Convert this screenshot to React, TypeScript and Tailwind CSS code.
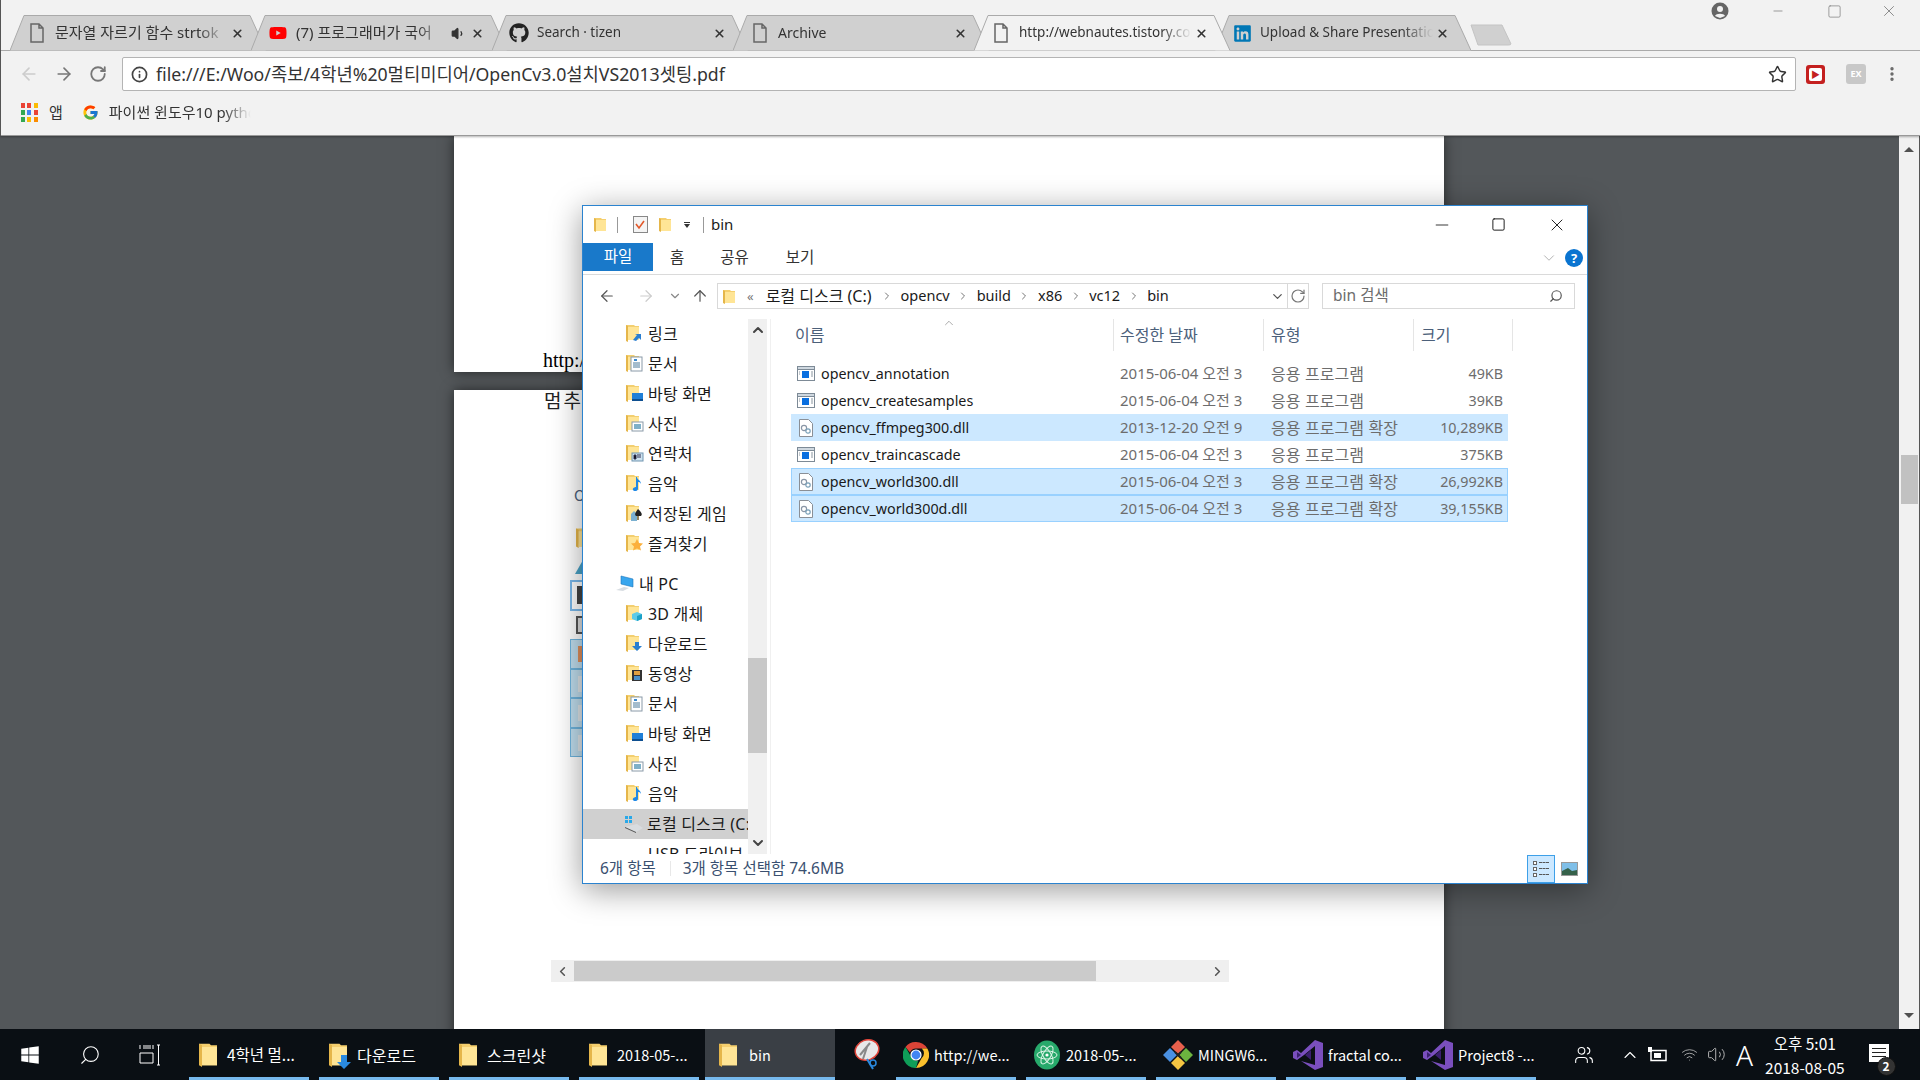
import React from "react";
import { FaGithub, FaYoutube, FaLinkedin, FaWindows } from "react-icons/fa";
import { FcGoogle } from "react-icons/fc";
import { X, Star, RotateCw, ArrowLeft, ArrowRight, Info, ChevronDown, ChevronUp, ChevronLeft, ChevronRight, Search, ArrowUp, Minus, Square, Volume1, Volume2, Users, Wifi, MoreVertical } from "lucide-react";

const FONT = "font-['Noto_Sans','Noto_Sans_CJK_KR',sans-serif]";
const CJK = "font-['Noto_Sans_CJK_KR','Noto_Sans',sans-serif]";

function PageIcon({ className = "" }: { className?: string }) {
  return (
    <svg width="14" height="20" viewBox="0 0 14 20" className={className}>
      <path d="M1 1h8l4 4v14H1z M9 1v4h4" fill="none" stroke="#666" strokeWidth="1.5" />
    </svg>
  );
}

function Folder({ w = 12, h = 15, className = "" }: { w?: number; h?: number; className?: string }) {
  return (
    <svg width={w} height={h} viewBox="0 0 12 15" preserveAspectRatio="none" className={className}>
      <path d="M0 1h7l1 1h4v12H2z" fill="#f5cf6e" />
      <path d="M0 1l2 1v13l-2-1z" fill="#e5b64a" />
      <path d="M2 3h10v11H2z" fill="#ffe596" />
    </svg>
  );
}

type TabT = { icon: React.ReactNode; title: string; active?: boolean; sound?: boolean; size: string };
const tabs: TabT[] = [
  { icon: <PageIcon />, title: "문자열 자르기 함수 strtok", size: "text-[15px]" },
  { icon: <FaYoutube size={18} color="#f00" />, title: "(7) 프로그래머가 국어", sound: true, size: "text-[15px]" },
  { icon: <FaGithub size={20} color="#222" />, title: "Search · tizen", size: "text-[13.5px]" },
  { icon: <PageIcon />, title: "Archive", size: "text-[14px]" },
  { icon: <PageIcon />, title: "http://webnautes.tistory.com", active: true, size: "text-[13.5px]" },
  { icon: <FaLinkedin size={19} color="#0077b5" />, title: "Upload & Share Presentations", size: "text-[13.5px]" },
];

function Tab({ t }: { t: TabT }) {
  return (
    <div className={`relative w-[256px] h-[36px] -ml-[15px] first:ml-0 shrink-0 flex items-center ${t.active ? "z-10" : ""}`}>
      <svg width="256" height="36" viewBox="0 0 256 36" className="absolute inset-0">
        <path d="M0 35.5L14 .5H240L256 35.5" fill={t.active ? "#f2f2f2" : "#d0d0d0"} stroke="#aaa" />
      </svg>
      <div className="relative w-[20px] ml-[17px] flex justify-center">{t.icon}</div>
      <div className={`relative ml-[8px] mb-[1px] ${t.sound ? "w-[149px]" : "w-[173px]"} overflow-hidden whitespace-nowrap ${t.size} text-[#333] [mask-image:linear-gradient(to_right,black_82%,transparent)]`}>
        {t.title}
      </div>
      {t.sound && <Volume1 size={15} className="relative ml-[6px]" fill="#333" color="#333" />}
      <X size={13} strokeWidth={3} color="#333" className={`relative ${t.sound ? "ml-[5px]" : "ml-[3px]"}`} />
    </div>
  );
}

function TabStrip() {
  return (
    <div className="h-[51px] flex items-start border-b border-[#aaa] pl-[9px]">
      <div className="flex pt-[15px]">
        {tabs.map((t) => (
          <Tab key={t.title} t={t} />
        ))}
        <svg width="42" height="22" viewBox="0 0 42 22" className="-ml-[1px] mt-[9px]">
          <path d="M1 1H32L41 20Q41 21 38 21H8Z" fill="#d0d0d0" stroke="#c4c4c4" />
        </svg>
      </div>
      <div className="flex-1" />
      <div className="flex items-center h-[22px] pr-[22px]">
        <svg width="18" height="18" viewBox="0 0 18 18">
          <circle cx="9" cy="9" r="8.5" fill="#666" />
          <circle cx="9" cy="7" r="3" fill="#f2f2f2" />
          <path d="M4 14c1-3 9-3 10 0l-5 2z" fill="#f2f2f2" />
        </svg>
        <Minus size={14} color="#777" strokeWidth={1.2} className="ml-[42px]" />
        <Square size={15} color="#777" strokeWidth={1.1} className="ml-[42px]" />
        <X size={18} color="#777" strokeWidth={1.1} className="ml-[38px]" />
      </div>
    </div>
  );
}

function Toolbar() {
  return (
    <div className="h-[46px] flex items-start pt-[6px]">
      <div className="w-[121px] h-[34px] flex items-center pl-[18px] gap-[15px]">
        <ArrowLeft size={20} color="#ccc" />
        <ArrowRight size={20} color="#777" />
        <RotateCw size={18} color="#777" strokeWidth={2.4} />
      </div>
      <div className="w-[1674px] h-[34px] bg-white border border-[#b4b4b4] rounded-[2px] flex items-center pl-[8px] pr-[8px]">
        <Info size={17} color="#444" strokeWidth={2.4} />
        <span className="ml-[8px] text-[17.7px] text-[#333] whitespace-nowrap">file:///E:/Woo/족보/4학년%20멀티미디어/OpenCv3.0설치VS2013셋팅.pdf</span>
        <div className="flex-1" />
        <Star size={19} color="#333" strokeWidth={1.8} />
      </div>
      <div className="flex-1 h-[34px] flex items-center pl-[10px]">
        <div className="w-[19px] h-[19px] rounded-[3px] bg-[#c4201f] flex items-center justify-center">
          <div className="w-[13px] h-[13px] bg-white rounded-[2px] flex items-center justify-center text-[9px] text-[#c4201f] font-bold leading-none">▶</div>
        </div>
        <div className="ml-[21px] w-[20px] h-[20px] rounded-[3px] bg-[#c8c8c8] flex items-center justify-center text-[9px] text-white font-bold">EX</div>
        <MoreVertical size={18} color="#666" strokeWidth={2.5} className="ml-[17px]" />
      </div>
    </div>
  );
}

function AppsGrid() {
  const c = ["#ea4335", "#ea4335", "#fbbc05", "#34a853", "#4285f4", "#ea4335", "#34a853", "#fbbc05", "#fb8c00"];
  return (
    <div className="grid grid-cols-3 gap-[2px] w-[17px]">
      {c.map((x, i) => (
        <div key={i} className="h-[5px] w-[4px]" style={{ background: x }} />
      ))}
    </div>
  );
}

function Bookmarks() {
  return (
    <div className="h-[39px] flex items-center border-b border-[#999] pl-[20px] pb-[7px] text-[15px] text-[#333]">
      <AppsGrid />
      <span className="ml-[11px]">앱</span>
      <FcGoogle size={17} className="ml-[19px]" />
      <span className="ml-[10px] w-[142px] overflow-hidden whitespace-nowrap [mask-image:linear-gradient(to_right,black_80%,transparent)]">파이썬 윈도우10 python</span>
    </div>
  );
}

function BehindBits() {
  return (
    <div className={`ml-[116px] w-[60px] ${CJK}`}>
      <div className="mt-[77px] ml-[4px] h-[16px] text-[15px] leading-[16px] text-[#4c607a]">O</div>
      <div className="mt-[24px] ml-[6px]"><Folder w={16} h={21} /></div>
      <div className="mt-[12px] ml-[5px] w-0 h-0 border-x-[8px] border-x-transparent border-b-[14px] border-b-[#4aa3c7]" />
      <div className="mt-[6px] h-[31px] border-2 border-[#7ab8ea] pl-[5px] pt-[4px]"><div className="w-[10px] h-[18px] bg-[#444]" /></div>
      <div className="mt-[5px] ml-[6px] w-[10px] h-[18px] border-2 border-[#555] bg-[#ddd]" />
      <div className="mt-[5px]">
        {["bg-[#e0905c]", "bg-[#dfe6ea]", "bg-[#dfe6ea]", "bg-[#dfe6ea]"].map((c, i) => (
          <div key={i} className="h-[29.5px] border border-[#6eb4dd] bg-[#c0deee] pl-[7px] pt-[6px]">
            <div className={`w-[8px] h-[16px] ${c}`} />
          </div>
        ))}
      </div>
    </div>
  );
}

function PdfArea() {
  return (
    <div className="flex-1 flex min-h-0">
      <div className="flex-1 bg-[#53575a] overflow-hidden">
        <div className="ml-[454px] w-[990px] h-[236px] bg-white shadow-[0_0_12px_rgba(0,0,0,0.55)] flex flex-col justify-end pl-[89px] font-['Liberation_Serif',serif] text-[20px] leading-[23px] text-black">
          http://
        </div>
        <div className="ml-[454px] mt-[18px] w-[990px] h-[700px] bg-white shadow-[0_0_12px_rgba(0,0,0,0.55)]">
          <div className={`pl-[90px] text-[19px] tracking-[2px] leading-[20px] text-[#222] ${CJK}`}>멈추</div>
          <BehindBits />
          <div className="ml-[97px] mt-[203px] w-[678px] h-[22px] bg-[#efefef] flex items-center relative">
            <ChevronLeft size={15} color="#555" strokeWidth={2.5} className="ml-[4px]" />
            <div className="absolute left-[23px] top-[1px] bottom-[1px] w-[522px] bg-[#cbcbcb]" />
            <div className="flex-1" />
            <ChevronRight size={15} color="#555" strokeWidth={2.5} className="mr-[4px]" />
          </div>
        </div>
      </div>
      <div className="w-[21px] bg-[#f1f1f1] border-r border-[#555] flex flex-col items-center relative">
        <div className="mt-[11px] w-0 h-0 border-x-[5px] border-x-transparent border-b-[5px] border-b-[#505050]" />
        <div className="mt-[303px] w-[17px] h-[49px] bg-[#c1c1c1]" />
        <div className="flex-1" />
        <div className="mb-[11px] w-0 h-0 border-x-[5px] border-x-transparent border-t-[5px] border-t-[#505050]" />
      </div>
    </div>
  );
}

/* ---------- explorer ---------- */
function Overlay({ kind }: { kind: string }) {
  switch (kind) {
    case "link":
      return <path d="M7 16l4-5-2-1h6v6l-2-2-3 3z" fill="#2a7fd0" />;
    case "doc":
      return <g><rect x="5" y="3" width="11" height="14" fill="#fff" stroke="#8a9aa8" /><path d="M7 9h7M7 11h7M7 13h7" stroke="#4a7a9a" /><path d="M8 5h3v2H8z" fill="#3a8ad0" /></g>;
    case "desktop":
      return <g><rect x="6" y="9" width="11" height="7" fill="#1f7fd8" /><rect x="6" y="15" width="11" height="2" fill="#0e4f90" /></g>;
    case "pic":
      return <g><rect x="6" y="8" width="11" height="9" fill="#fff" stroke="#8a9aa8" /><rect x="8" y="10" width="7" height="5" fill="#7fb0c8" /></g>;
    case "contact":
      return <g><rect x="6" y="9" width="11" height="8" fill="#cfe3f0" stroke="#6f94b0" /><path d="M8 11h2v4H8zM11 11h4M11 13h4" stroke="#335" /></g>;
    case "music":
      return <path d="M10 3l1 0c0 3 4 3 4 7-1-2-2-2-3-2v7c0 2-4 3-5 1s2-3 3-3z" fill="#1e88e5" />;
    case "game":
      return <g><path d="M5 10l3-3 3 3v7H5z" fill="#7ab0d0" /><path d="M12 5c3 3 5 5 3 7h-5c-2-2 0-4 2-7z" fill="#222" /><path d="M12 10v6" stroke="#222" /></g>;
    case "star":
      return <path d="M11 5l2 4 4 .5-3 3 1 4-4-2-4 2 1-4-3-3 4-.5z" fill="#fbb03b" />;
    case "cube":
      return <g><path d="M11 8l5 2v5l-5 2-5-2v-5z" fill="#5ccbe8" /><path d="M11 12l5-2v5l-5 2z" fill="#1ba0c8" /></g>;
    case "down":
      return <path d="M9 8h4v4h3l-5 5-5-5h3z" fill="#2a7fd0" />;
    case "video":
      return <g><rect x="6" y="6" width="10" height="11" fill="#333" /><rect x="8" y="7" width="6" height="4" fill="#e0a040" /><rect x="8" y="12" width="6" height="4" fill="#4a90c8" /></g>;
    default:
      return null;
  }
}

function TreeIcon({ kind }: { kind: string }) {
  return (
    <svg width="20" height="20" viewBox="0 0 20 20" className="shrink-0">
      <path d="M0 1h8l1 1h4v13H2z" fill="#f3cf70" />
      <path d="M0 1l2 1v16l-2-1z" fill="#e5b64a" />
      <path d="M2 3h11v13H2z" fill="#ffe596" />
      <Overlay kind={kind} />
    </svg>
  );
}

const quick = [
  ["링크", "link"],
  ["문서", "doc"],
  ["바탕 화면", "desktop"],
  ["사진", "pic"],
  ["연락처", "contact"],
  ["음악", "music"],
  ["저장된 게임", "game"],
  ["즐겨찾기", "star"],
];
const pc = [
  ["3D 개체", "cube"],
  ["다운로드", "down"],
  ["동영상", "video"],
  ["문서", "doc"],
  ["바탕 화면", "desktop"],
  ["사진", "pic"],
  ["음악", "music"],
];

function TreeRow({ label, kind }: { label: string; kind: string }) {
  return (
    <div className="h-[30px] flex items-center pl-[43px] gap-[2px] whitespace-nowrap">
      <TreeIcon kind={kind} />
      <span>{label}</span>
    </div>
  );
}

function NavTree() {
  return (
    <div className="flex h-full">
      <div className="w-[165px] h-full overflow-hidden text-[16px] tracking-[0.2px] text-[#1a1a1a]">
        {quick.map(([l, k]) => (
          <TreeRow key={l} label={l} kind={k} />
        ))}
        <div className="h-[10px]" />
        <div className="h-[30px] flex items-center pl-[32px] gap-[4px]">
          <svg width="20" height="18" viewBox="0 0 20 18" className="shrink-0">
            <path d="M6 1l12 3v8L6 9z" fill="#38a6ee" stroke="#1b75bc" strokeWidth=".6" />
            <path d="M1 15l8-3 5 1-6 3z" fill="#d8dde2" />
          </svg>
          <span>내 PC</span>
        </div>
        {pc.map(([l, k]) => (
          <TreeRow key={l} label={l} kind={k} />
        ))}
        <div className="h-[30px] bg-[#d0d0d0] flex items-center pl-[41px] gap-[3px] whitespace-nowrap">
          <svg width="20" height="18" viewBox="0 0 20 18" className="shrink-0">
            <path d="M1 1h3v3H1zM5 1h3v3H5zM1 5h3v3H1zM5 5h3v3H5z" fill="#29a8e8" />
            <path d="M1 12l12-3 6 4-7 4z" fill="#d9dcdf" />
            <path d="M1 12l11 5v1L1 13z" fill="#555" />
          </svg>
          <span>로컬 디스크 (C:)</span>
        </div>
        <div className="h-[30px] pl-[65px] flex items-center whitespace-nowrap">USB 드라이브 (D:)</div>
      </div>
      <div className="w-[19px] bg-[#f0f0f0] flex flex-col items-center">
        <ChevronUp size={16} strokeWidth={3} color="#444" className="mt-[3px]" />
        <div className="mt-[320px] w-full h-[95px] bg-[#c8c8c8]" />
        <div className="flex-1" />
        <ChevronDown size={16} strokeWidth={3} color="#444" className="mb-[3px]" />
      </div>
      <div className="w-[4px] border-r border-[#f0f0f0]" />
    </div>
  );
}

function ExeIcon() {
  return (
    <svg width="18" height="15" viewBox="0 0 18 15" className="shrink-0">
      <rect x=".5" y=".5" width="17" height="14" fill="#fff" stroke="#7d8a96" />
      <rect x=".5" y=".5" width="17" height="3" fill="#cfd8e0" stroke="#7d8a96" />
      <rect x="5" y="5" width="7" height="7" fill="#0a6fe0" />
      <path d="M14 6h2M14 8h2M14 10h2M2 6h1M2 8h1" stroke="#8a96a0" />
    </svg>
  );
}
function DllIcon() {
  return (
    <svg width="14" height="18" viewBox="0 0 14 18" className="shrink-0 ml-[2px] mr-[2px]">
      <path d="M.5.5h9l4 4v13H.5z" fill="#fff" stroke="#8a8f96" />
      <circle cx="5" cy="9" r="2.6" fill="none" stroke="#8a96a6" strokeWidth="1.2" />
      <circle cx="9" cy="12" r="2.2" fill="none" stroke="#7aa0b8" strokeWidth="1.2" />
    </svg>
  );
}

const files = [
  { n: "opencv_annotation", d: "2015-06-04 오전 3", t: "응용 프로그램", s: "49KB", dll: false, sel: 0 },
  { n: "opencv_createsamples", d: "2015-06-04 오전 3", t: "응용 프로그램", s: "39KB", dll: false, sel: 0 },
  { n: "opencv_ffmpeg300.dll", d: "2013-12-20 오전 9", t: "응용 프로그램 확장", s: "10,289KB", dll: true, sel: 1 },
  { n: "opencv_traincascade", d: "2015-06-04 오전 3", t: "응용 프로그램", s: "375KB", dll: false, sel: 0 },
  { n: "opencv_world300.dll", d: "2015-06-04 오전 3", t: "응용 프로그램 확장", s: "26,992KB", dll: true, sel: 2 },
  { n: "opencv_world300d.dll", d: "2015-06-04 오전 3", t: "응용 프로그램 확장", s: "39,155KB", dll: true, sel: 2 },
];

function FilePane() {
  return (
    <div className="flex-1 pl-[20px] min-w-0">
      <div className="relative grid grid-cols-[322px_150px_150px_100px] h-[32px] text-[16px] text-[#4c607a]">
        <div className="pl-[4px] flex items-center">이름</div>
        <div className="pl-[6px] flex items-center border-l border-[#e5e5e5]">수정한 날짜</div>
        <div className="pl-[7px] flex items-center border-l border-[#e5e5e5]">유형</div>
        <div className="pl-[7px] flex items-center border-l border-r border-[#e5e5e5]">크기</div>
        <ChevronUp size={14} color="#888" strokeWidth={1.2} className="absolute left-[151px] -top-[3px]" />
      </div>
      <div className="mt-[9px] w-[717px] text-[14.3px]">
        {files.map((f) => (
          <div
            key={f.n}
            className={`grid grid-cols-[322px_150px_150px_95px] h-[27px] items-center border ${f.sel ? "bg-[#cce8ff]" : ""} ${f.sel === 2 ? "border-[#99d1ff]" : "border-transparent"}`}
          >
            <div className="pl-[5px] flex items-center gap-[6px] text-[#1a1a1a] whitespace-nowrap">
              {f.dll ? <DllIcon /> : <ExeIcon />}
              <span>{f.n}</span>
            </div>
            <div className="pl-[6px] text-[15px] text-[#6d6d6d] whitespace-nowrap">{f.d}</div>
            <div className="pl-[7px] text-[16px] tracking-[0.1px] text-[#6d6d6d] whitespace-nowrap">{f.t}</div>
            <div className="pr-[6px] text-right text-[#6d6d6d]">{f.s}</div>
          </div>
        ))}
      </div>
    </div>
  );
}

function Crumb() {
  return <ChevronRight size={12} color="#777" strokeWidth={2} className="shrink-0" />;
}

function Explorer() {
  return (
    <div className={`absolute left-[582px] top-[205px] w-[1006px] h-[679px] bg-white border border-[#2b83cf] shadow-[0_6px_30px_rgba(0,0,0,0.4)] flex flex-col ${FONT}`}>
      <div className="h-[37px] flex items-center text-[15px] text-[#1a1a1a] shrink-0">
        <Folder className="ml-[11px]" />
        <div className="ml-[11px] h-[16px] w-px bg-[#999]" />
        <svg width="15" height="17" viewBox="0 0 15 17" className="ml-[15px]">
          <rect x=".5" y=".5" width="14" height="16" fill="#f4f4f4" stroke="#888" />
          <path d="M3 8l3 4 5-7" fill="none" stroke="#e2582a" strokeWidth="1.6" />
        </svg>
        <Folder className="ml-[11px]" />
        <div className="ml-[12px] w-[8px] flex flex-col items-center">
          <div className="w-[6px] h-px bg-[#333] mb-[1px]" />
          <div className="w-0 h-0 border-x-[3px] border-x-transparent border-t-[4px] border-t-[#333]" />
        </div>
        <div className="ml-[12px] h-[16px] w-px bg-[#999]" />
        <span className="ml-[7px]">bin</span>
        <div className="flex-1" />
        <Minus size={20} strokeWidth={1} color="#111" className="-mr-[1px]" />
        <Square size={15} strokeWidth={1.5} color="#111" className="ml-[40px] mr-[1px]" />
        <X size={20} strokeWidth={1.1} color="#111" className="ml-[40px] mr-[20px]" />
      </div>
      <div className="h-[32px] flex items-start border-b border-[#dadada] text-[15.5px] text-[#333] shrink-0">
        <div className="w-[70px] h-[28px] bg-[#1979ca] text-white flex items-center justify-center">파일</div>
        <span className="ml-[17px] mt-[3px]">홈</span>
        <span className="ml-[36px] mt-[3px]">공유</span>
        <span className="ml-[37px] mt-[3px]">보기</span>
        <div className="flex-1" />
        <ChevronDown size={18} strokeWidth={1} color="#999" className="mt-[6px]" />
        <div className="ml-[7px] mr-[4px] mt-[6px] w-[18px] h-[18px] rounded-full bg-[#0a74d0] text-white text-[13px] font-bold flex items-center justify-center leading-none">?</div>
      </div>
      <div className="h-[44px] flex items-start pt-[8px] shrink-0">
        <div className="w-[134px] h-[26px] flex items-center pl-[15px]">
          <ArrowLeft size={18} color="#555" strokeWidth={1.6} />
          <ArrowRight size={18} color="#ccc" strokeWidth={1.6} className="ml-[21px]" />
          <ChevronDown size={14} color="#888" strokeWidth={2} className="ml-[13px]" />
          <ArrowUp size={18} color="#555" strokeWidth={1.6} className="ml-[9px]" />
        </div>
        <div className="w-[592px] h-[26px] border border-[#d9d9d9] flex items-center text-[14.5px] text-[#1a1a1a] pl-[5px] whitespace-nowrap">
          <Folder />
          <span className="ml-[12px] mr-[12px] text-[#777] text-[13px] leading-none">«</span>
          <div className="flex items-center gap-[7.5px]">
            <span className="text-[16px] mr-[2px]">로컬 디스크 (C:)</span>
            <Crumb />
            <span>opencv</span>
            <Crumb />
            <span>build</span>
            <Crumb />
            <span>x86</span>
            <Crumb />
            <span>vc12</span>
            <Crumb />
            <span>bin</span>
          </div>
          <div className="flex-1" />
          <ChevronDown size={15} color="#555" strokeWidth={2} className="mr-[2px]" />
          <div className="h-full w-[21px] border-l border-[#d9d9d9] flex items-center justify-center">
            <RotateCw size={16} color="#777" strokeWidth={1.8} />
          </div>
        </div>
        <div className="ml-[13px] w-[253px] h-[26px] border border-[#d9d9d9] flex items-center pl-[10px] pr-[11px] text-[15.5px] text-[#6d6d6d]">
          bin 검색
          <div className="flex-1" />
          <Search size={14} color="#555" strokeWidth={2} className="-scale-x-100" />
        </div>
      </div>
      <div className="flex-1 flex min-h-0">
        <NavTree />
        <FilePane />
      </div>
      <div className="h-[29px] flex items-center text-[15.5px] text-[#3a5070] pl-[17px] shrink-0">
        <span>6개 항목</span>
        <div className="ml-[14px] h-[15px] w-px bg-[#e8e8e8]" />
        <span className="ml-[12px]">3개 항목 선택함 74.6MB</span>
        <div className="flex-1" />
        <div className="w-[28px] h-[28px] bg-[#cce8ff] border border-[#3ea0e8] flex flex-col items-center justify-center gap-[2px]">
          {[0, 1, 2].map((i) => (
            <div key={i} className="flex items-center gap-[2px]">
              <div className="w-[4px] h-[4px] border border-[#666] bg-white" />
              <div className="w-[10px] border-t border-dashed border-[#555]" />
            </div>
          ))}
        </div>
        <svg width="17" height="14" viewBox="0 0 17 14" className="ml-[6px] mr-[9px]">
          <rect x=".5" y=".5" width="16" height="13" fill="#7fbfe8" stroke="#999" />
          <path d="M1 9l6-3 4 3 5-1v5H1z" fill="#35614a" />
        </svg>
      </div>
    </div>
  );
}

/* ---------- taskbar ---------- */
function TaskFolder({ down }: { down?: boolean }) {
  return (
    <div className="relative w-[18px] h-[25px] shrink-0">
      <Folder w={18} h={25} />
      {down && (
        <svg width="14" height="14" viewBox="0 0 14 14" className="absolute left-[8px] top-[13px]">
          <path d="M4 0h6v7h4l-7 7-7-7h4z" fill="#2a8ae0" />
        </svg>
      )}
    </div>
  );
}

function ChromeLogo() {
  return (
    <svg width="26" height="26" viewBox="0 0 26 26" className="shrink-0">
      <path d="M13 0a13 13 0 0 1 11.3 6.5H13a6.5 6.5 0 0 0-6 4L2.5 5A13 13 0 0 1 13 0z" fill="#db4437" />
      <path d="M24.3 6.5A13 13 0 0 1 13 26l5.6-9.7a6.5 6.5 0 0 0 .2-9.8z" fill="#fbc02d" />
      <path d="M13 26A13 13 0 0 1 2.5 5l5.6 9.7a6.5 6.5 0 0 0 7 4z" fill="#0f9d58" />
      <circle cx="13" cy="13" r="5" fill="#4285f4" stroke="#fff" strokeWidth="1.2" />
    </svg>
  );
}
function AtomLogo() {
  return (
    <svg width="28" height="30" viewBox="0 0 28 30" className="shrink-0">
      <ellipse cx="14" cy="15" rx="13" ry="14.5" fill="#27a96b" />
      <g fill="none" stroke="#dff5e8" strokeWidth="1">
        <ellipse cx="14" cy="15" rx="10" ry="4" transform="rotate(60 14 15)" />
        <ellipse cx="14" cy="15" rx="10" ry="4" transform="rotate(-60 14 15)" />
        <ellipse cx="14" cy="15" rx="10" ry="4" />
      </g>
      <circle cx="14" cy="15" r="1.6" fill="#fff" />
    </svg>
  );
}
function GitLogo() {
  return (
    <svg width="30" height="30" viewBox="0 0 30 30" className="shrink-0">
      <path d="M15 0l7 7-7 7-7-7z" fill="#e8604c" />
      <path d="M7 8l7 7-7 7-7-7z" fill="#4a90e2" />
      <path d="M23 8l7 7-7 7-7-7z" fill="#6cb33f" />
      <path d="M15 16l7 7-7 7-7-7z" fill="#f5c542" />
      <path d="M12 12l6 6M18 12l-3 3" stroke="#222" strokeWidth="2" />
    </svg>
  );
}
function VsLogo() {
  return (
    <svg width="30" height="30" viewBox="0 0 30 30" className="shrink-0">
      <path d="M22 0l8 3v24l-8 3-14-9 14 4V6L11 15 4 20 0 18V12l4-2 4 3z" fill="#7a4fbe" />
      <path d="M4 12l4 3-4 3zM12 15l6-5v10z" fill="#3a1f6e" />
    </svg>
  );
}

const taskItems: { icon: React.ReactNode; label: string; active?: boolean; size?: string }[] = [
  { icon: <TaskFolder />, label: "4학년 멀...", size: "text-[15.5px]" },
  { icon: <TaskFolder down />, label: "다운로드", size: "text-[16px]" },
  { icon: <TaskFolder />, label: "스크린샷", size: "text-[16px]" },
  { icon: <TaskFolder />, label: "2018-05-..." },
  { icon: <TaskFolder />, label: "bin", active: true },
];
const taskItems2: { icon: React.ReactNode; label: string }[] = [
  { icon: <ChromeLogo />, label: "http://we..." },
  { icon: <AtomLogo />, label: "2018-05-..." },
  { icon: <GitLogo />, label: "MINGW6..." },
  { icon: <VsLogo />, label: "fractal co..." },
  { icon: <VsLogo />, label: "Project8 -..." },
];

function TaskBtn({ icon, label, active, size, pad }: { icon: React.ReactNode; label: string; active?: boolean; size?: string; pad: string }) {
  return (
    <div className={`relative w-[130px] h-full shrink-0 flex items-center ${size ?? "text-[14.5px]"} text-white whitespace-nowrap ${active ? "bg-[#3a3f45]" : ""} ${pad}`}>
      {icon}
      <span>{label}</span>
      <div className={`absolute bottom-0 h-[3px] bg-[#76b9ed] ${active ? "left-0 right-0" : "left-0 w-[120px]"}`} />
    </div>
  );
}

function Taskbar() {
  return (
    <div className={`h-[51px] bg-[#0a0f14] flex items-stretch shrink-0 ${CJK}`}>
      <div className="w-[60px] flex items-center justify-center">
        <FaWindows size={20} color="#fff" />
      </div>
      <div className="w-[60px] flex items-center justify-center">
        <Search size={22} color="#fff" strokeWidth={1.2} className="-scale-x-100" />
      </div>
      <div className="w-[69px] flex items-center pl-[19px]">
        <svg width="22" height="22" viewBox="0 0 22 22">
          <path d="M1 1v4M1 9h13v10H1zM14 1v4M4 2h8M4 4h8M18 1h3M19.5 1v20M18 21h3" stroke="#fff" fill="none" />
        </svg>
      </div>
      {taskItems.map((t) => (
        <div key={t.label} className={t.active ? "-ml-[4px] mr-[4px]" : ""}>
          <TaskBtn {...t} pad={t.active ? "pl-[14px] gap-[12px]" : "pl-[10px] gap-[10px]"} />
        </div>
      ))}
      <div className="w-[57px] flex items-center justify-center shrink-0">
        <svg width="30" height="32" viewBox="0 0 30 32">
          <ellipse cx="14" cy="11" rx="12" ry="10" fill="#e8e8e8" stroke="#e0453a" strokeWidth="1.5" transform="rotate(-20 14 11)" />
          <path d="M7 16l10-12M10 20l4-12" stroke="#888" strokeWidth="2" />
          <path d="M14 20l6 10" stroke="#2a8ae0" strokeWidth="2" />
          <circle cx="20" cy="24" r="3" fill="none" stroke="#2a8ae0" strokeWidth="1.5" />
        </svg>
      </div>
      {taskItems2.map((t) => (
        <TaskBtn key={t.label} {...t} pad="pl-[7px] gap-[5px]" />
      ))}
      <div className="flex-1 relative flex items-center text-white">
        <Users size={20} strokeWidth={1.3} className="ml-[28px]" />
        <ChevronUp size={20} strokeWidth={1.3} className="ml-[26px]" />
        <svg width="20" height="16" viewBox="0 0 20 16" className="ml-[8px]">
          <rect x="3" y="3.5" width="15" height="10" fill="none" stroke="#fff" strokeWidth="1.5" />
          <rect x="0" y="0" width="4" height="5" fill="#fff" />
          <rect x="6" y="6" width="7" height="5" fill="#fff" />
        </svg>
        <Wifi size={17} strokeWidth={1.2} color="#bbb" className="ml-[13px]" />
        <Volume2 size={19} strokeWidth={1.2} color="#bbb" className="ml-[9px]" />
        <span className="ml-[10px] text-[28px] leading-none font-['Noto_Sans',sans-serif] font-light">A</span>
        <div className="ml-[12px] flex flex-col items-center text-[15.5px] leading-[24px]">
          <span>오후 5:01</span>
          <span>2018-08-05</span>
        </div>
        <div className="ml-[24px] relative w-[20px] h-[18px] bg-white mb-[4px]">
          <div className="mt-[4px] mx-[3px] h-px bg-[#222]" />
          <div className="mt-[3px] mx-[3px] h-px bg-[#222]" />
          <div className="mt-[3px] mx-[3px] h-px bg-[#222]" />
          <div className="absolute -right-[7px] -bottom-[14px] w-[19px] h-[19px] rounded-full bg-[#333] border border-[#111] text-[12px] font-bold flex items-center justify-center leading-none">2</div>
        </div>
      </div>
    </div>
  );
}

export default function App() {
  return (
    <div className={`relative w-[1920px] h-[1080px] overflow-hidden bg-[#f2f2f2] flex flex-col ${FONT}`}>
      <div className="h-[136px] shrink-0 bg-[#f2f2f2] border-l border-[#555] relative z-10 shadow-[0_1px_2px_rgba(0,0,0,0.3)]">
        <TabStrip />
        <Toolbar />
        <Bookmarks />
      </div>
      <PdfArea />
      <Taskbar />
      <Explorer />
    </div>
  );
}
